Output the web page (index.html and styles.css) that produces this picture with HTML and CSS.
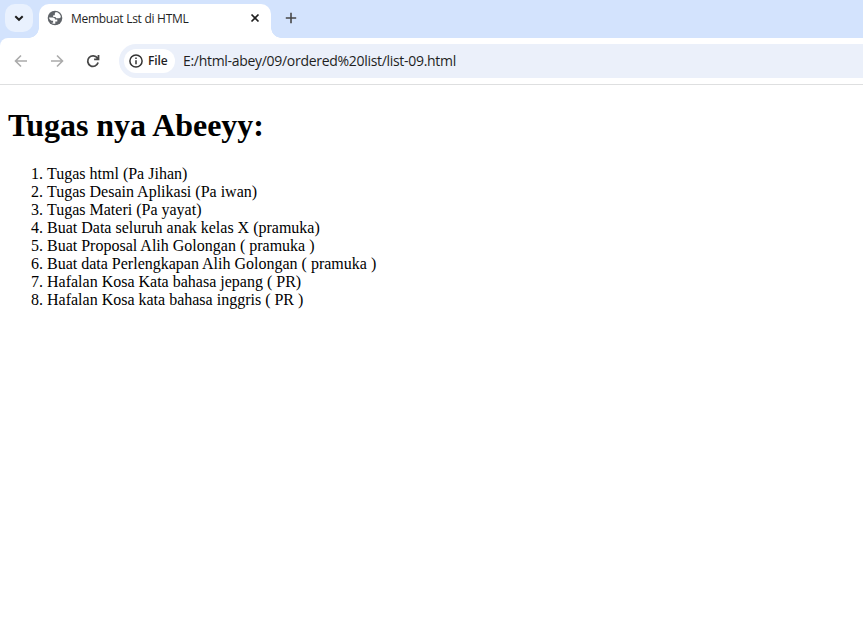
FILE: index.html
```html
<!DOCTYPE html>
<html lang="id">
<head>
<meta charset="utf-8">
<title>Membuat Lst di HTML</title>
<link rel="stylesheet" href="styles.css">
</head>
<body>
<header class="browser">
  <div class="tabstrip">
    <div class="search"><svg width="10" height="10" viewBox="0 0 10 10"><path d="M1.3 3.2 5 6.8 8.7 3.2"/></svg></div>
    <div class="tab">
      <svg class="globe" width="16" height="16" viewBox="0 0 16 16"><circle cx="8" cy="8" r="7.3" fill="#5f6368"/><path d="M8.700 2.100C11.600 2.400 13.700 4.700 13.900 7.200L12.300 8.300H9.800C8.900 8.300 8.600 7.800 8.600 7H6.200V5.200H7.800V3.400ZM2 7.600H5.700C7.300 7.600 8 8.400 8 9.600H10.300V11.500H8.300V13.800C6.900 14 5.400 13.500 4.300 12.700H6.100V10.800H4.700C3.200 10.400 2.100 9.200 2 7.600Z" fill="#fff"/></svg>
      <span class="tab-title">Membuat Lst di HTML</span>
      <svg class="close" width="10" height="10" viewBox="0 0 10 10"><path d="M1.500 1.500 8.500 8.500M8.500 1.500 1.500 8.500"/></svg>
    </div>
    <svg class="plus" width="12" height="12" viewBox="0 0 12 12"><path d="M6 .8V11.200M.8 6H11.200"/></svg>
  </div>
  <div class="toolbar">
    <svg class="arrow" width="14" height="14" viewBox="0 0 14 14"><path d="M13 7H1.800M7 1.500 1.500 7 7 12.500"/></svg>
    <svg class="arrow forward" width="14" height="14" viewBox="0 0 14 14"><path d="M1 7H12.200M7 1.500 12.500 7 7 12.500"/></svg>
    <svg class="reload" width="14" height="14" viewBox="0 0 14 14"><path d="M12.100 8.600A5.300 5.300 0 1 1 11.400 4.100L12.400 5.300M12.500 1V5.400H8.100"/></svg>
    <div class="address">
      <div class="chip">
        <svg width="14" height="14" viewBox="0 0 14 14"><circle cx="7" cy="7" r="6.100"/><path d="M7 6.300V10.300M7 3.500V5"/></svg>
        <span>File</span>
      </div>
      <span class="url">E:/html-abey/09/ordered%20list/list-09.html</span>
    </div>
  </div>
</header>
<main>
  <h1>Tugas nya Abeeyy:</h1>
  <ol>
    <li>Tugas html (Pa Jihan)</li>
    <li>Tugas Desain Aplikasi (Pa iwan)</li>
    <li>Tugas Materi (Pa yayat)</li>
    <li>Buat Data seluruh anak kelas X (pramuka)</li>
    <li>Buat Proposal Alih Golongan ( pramuka )</li>
    <li>Buat data Perlengkapan Alih Golongan ( pramuka )</li>
    <li>Hafalan Kosa Kata bahasa jepang ( PR)</li>
    <li>Hafalan Kosa kata bahasa inggris ( PR )</li>
  </ol>
</main>
</body>
</html>
```
FILE: styles.css
```css
* { box-sizing: border-box; }
body { margin: 0; background: #fff; color: #000; font-family: "Liberation Serif", serif; overflow: hidden; }
svg { display: block; flex: none; fill: none; }
.browser { background: #d3e3fd; font-family: "Open Sans", "Noto Sans", sans-serif; color: #1f1f1f; }
.tabstrip { display: flex; height: 38px; padding: 4px 0 0 5px; }
.search { width: 28px; height: 28px; border-radius: 10px; background: #e9f1fe; display: flex; align-items: center; justify-content: center; }
.search svg { stroke: #1f1f1f; stroke-width: 2; }
.tab { position: relative; width: 232px; height: 34px; margin-left: 6px; padding: 0 11px 6px 8px; border-radius: 10px 10px 0 0; background: #fff; display: flex; align-items: center; }
.tab::before, .tab::after { content: ""; position: absolute; bottom: 0; width: 10px; height: 10px; }
.tab::before { left: -10px; background: radial-gradient(circle at 0 0, transparent 9.5px, #fff 10px); }
.tab::after { right: -10px; background: radial-gradient(circle at 100% 0, transparent 9.5px, #fff 10px); }
.tab-title { margin: 1px 0 0 8px; font-size: 12px; line-height: 16px; white-space: nowrap; letter-spacing: -0.28px; }
.close { margin-left: auto; stroke: #1f1f1f; stroke-width: 1.7; }
.plus { margin: 8px 0 0 14px; stroke: #474747; stroke-width: 1.6; }
.toolbar { height: 47px; display: flex; align-items: center; padding: 0 0 0 14px; background: #fff; border-bottom: 1px solid #dedfe0; border-radius: 8px 0 0 0; }
.arrow { stroke: #ababab; stroke-width: 1.6; }
.forward { margin-left: 22px; }
.reload { margin-left: 22px; stroke: #474747; stroke-width: 1.8; }
.address { flex: 1; height: 34px; margin-left: 19px; padding-left: 5px; border-radius: 17px 0 0 17px; background: #ebf0fa; display: flex; align-items: center; white-space: nowrap; }
.chip { width: 51px; height: 24px; padding-left: 5px; border-radius: 12px; background: #fff; display: flex; align-items: center; font-size: 12px; font-weight: 600; }
.chip svg { stroke: #333; stroke-width: 1.5; }
.chip span { margin: -1px 0 0 5px; letter-spacing: -0.1px; }
.url { margin: -1px 0 0 8px; font-size: 14px; letter-spacing: -0.3px; }
main { padding: 0 8px; }
h1 { margin: 22px 0 0; font-size: 32px; line-height: 37px; letter-spacing: -0.05px; }
ol { margin: 21px 0 0; padding-left: 39px; font-size: 16px; line-height: 18px; }
```
